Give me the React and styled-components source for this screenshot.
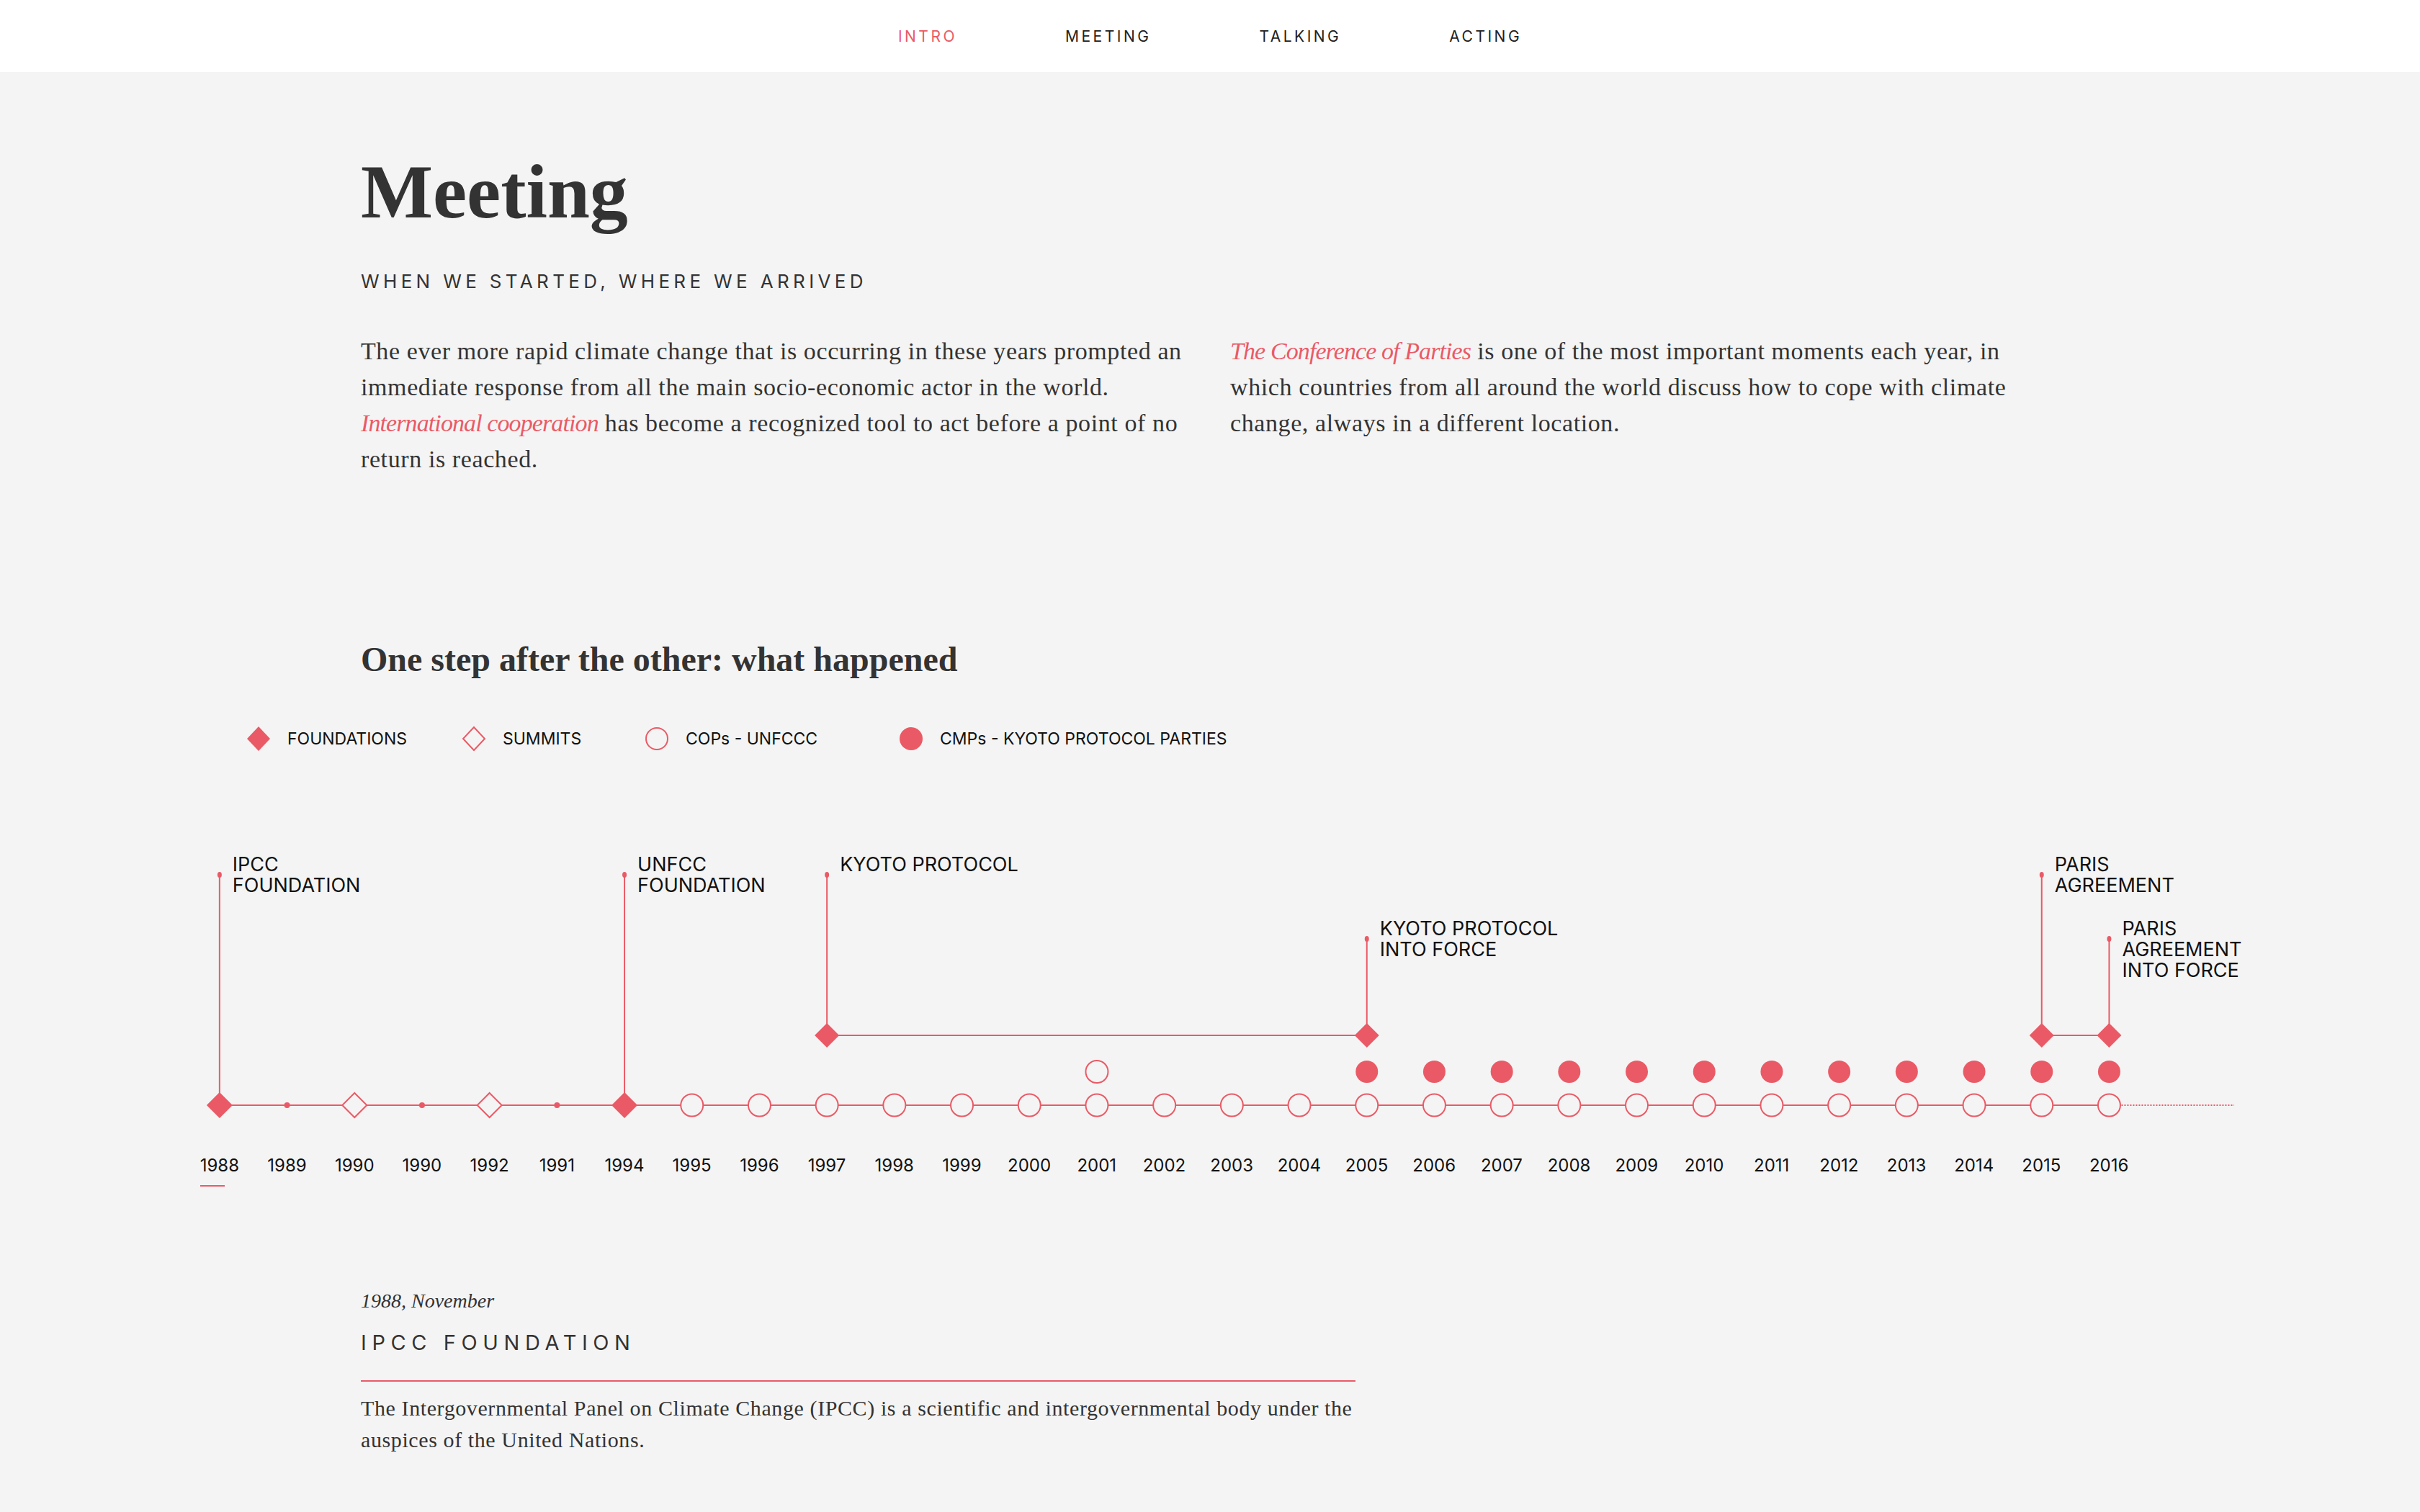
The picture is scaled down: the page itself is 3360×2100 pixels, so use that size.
import React from "react";
import styled, { createGlobalStyle } from "styled-components";

const RED = "#ea5a66";
const BG = "#f4f4f4";
const STEP = 93.7;
const cx = i => STEP / 2 + i * STEP;

const AXIS_Y = 365;
const CMP_Y = 318.5;
const BRACKET_Y = 268;
const HIGH = 45;
const LOW = 134;

const years = [
  "1988", "1989", "1990", "1990", "1992", "1991", "1994", "1995", "1996", "1997",
  "1998", "1999", "2000", "2001", "2002", "2003", "2004", "2005", "2006", "2007",
  "2008", "2009", "2010", "2011", "2012", "2013", "2014", "2015", "2016"
];

const axisType = i => {
  if (i === 0 || i === 6) return "foundation";
  if (i === 2 || i === 4) return "summit";
  if (i < 7) return "dot";
  return "cop";
};

const events = [
  { i: 0, top: HIGH, end: AXIS_Y, lines: ["IPCC", "FOUNDATION"] },
  { i: 6, top: HIGH, end: AXIS_Y, lines: ["UNFCC", "FOUNDATION"] },
  { i: 9, top: HIGH, end: BRACKET_Y, lines: ["KYOTO PROTOCOL"] },
  { i: 17, top: LOW, end: BRACKET_Y, lines: ["KYOTO PROTOCOL", "INTO FORCE"] },
  { i: 27, top: HIGH, end: BRACKET_Y, lines: ["PARIS", "AGREEMENT"] },
  { i: 28, top: LOW, end: BRACKET_Y, lines: ["PARIS", "AGREEMENT", "INTO FORCE"] }
];

const GlobalStyle = createGlobalStyle`
  html, body {
    margin: 0;
    padding: 0;
    background: ${BG};
  }
  * {
    box-sizing: border-box;
  }
`;

const Diamond = ({ x, y, r, filled }) => (
  <path
    d={`M${x} ${y - r} L${x + r} ${y} L${x} ${y + r} L${x - r} ${y} Z`}
    fill={filled ? RED : BG}
    stroke={RED}
    strokeWidth={filled ? 0 : 2}
  />
);

const Ring = ({ x, y, filled }) => (
  <circle
    cx={x}
    cy={y}
    r={15.5}
    fill={filled ? RED : BG}
    stroke={RED}
    strokeWidth={filled ? 0 : 2}
  />
);

const AxisMarker = ({ i }) => {
  const type = axisType(i);
  const x = cx(i);
  if (type === "foundation") return <Diamond x={x} y={AXIS_Y} r={18} filled />;
  if (type === "summit") return <Diamond x={x} y={AXIS_Y} r={17} />;
  if (type === "dot") return <circle cx={x} cy={AXIS_Y} r={4} fill={RED} />;
  return <Ring x={x} y={AXIS_Y} />;
};

const LegendIcon = ({ kind }) => (
  <svg width="34" height="36" viewBox="0 0 34 36">
    {kind === "foundation" && <path d="M17 1 L33 18 L17 35 L1 18 Z" fill={RED} />}
    {kind === "summit" && (
      <path d="M17 2 L32 18 L17 34 L2 18 Z" fill="none" stroke={RED} strokeWidth="2" />
    )}
    {kind === "cop" && <circle cx="17" cy="18" r="15" fill="none" stroke={RED} strokeWidth="2" />}
    {kind === "cmp" && <circle cx="17" cy="18" r="16" fill={RED} />}
  </svg>
);

const TimelineChart = () => (
  <Chart>
    <svg width="2844" height="400" viewBox="0 0 2844 400">
      <line x1={cx(0)} y1={AXIS_Y} x2={cx(28)} y2={AXIS_Y} stroke={RED} strokeWidth="2" />
      <line
        x1={cx(28) + 17}
        y1={AXIS_Y}
        x2={2844}
        y2={AXIS_Y}
        stroke={RED}
        strokeWidth="2"
        strokeDasharray="2 2"
      />
      <line x1={cx(9)} y1={BRACKET_Y} x2={cx(17)} y2={BRACKET_Y} stroke={RED} strokeWidth="2" />
      <line x1={cx(27)} y1={BRACKET_Y} x2={cx(28)} y2={BRACKET_Y} stroke={RED} strokeWidth="2" />
      {events.map(e => (
        <g key={e.i}>
          <line x1={cx(e.i)} y1={e.top} x2={cx(e.i)} y2={e.end} stroke={RED} strokeWidth="2" />
          <ellipse cx={cx(e.i)} cy={e.top} rx="3" ry="4" fill={RED} />
        </g>
      ))}
      {[9, 17, 27, 28].map(i => (
        <Diamond key={i} x={cx(i)} y={BRACKET_Y} r={17} filled />
      ))}
      <Ring x={cx(13)} y={CMP_Y} />
      {years.map((y, i) => (i >= 17 ? <Ring key={i} x={cx(i)} y={CMP_Y} filled /> : null))}
      {years.map((y, i) => (
        <AxisMarker key={i} i={i} />
      ))}
    </svg>
    {events.map(e => (
      <EventLabel key={e.i} style={{ left: cx(e.i) + 18, top: e.top - 29 }}>
        {e.lines.map(l => (
          <div key={l}>{l}</div>
        ))}
      </EventLabel>
    ))}
  </Chart>
);

const App = () => (
  <>
    <GlobalStyle />
    <Nav>
      <NavItem $active>INTRO</NavItem>
      <NavItem>MEETING</NavItem>
      <NavItem>TALKING</NavItem>
      <NavItem>ACTING</NavItem>
    </Nav>

    <Content>
      <Title>Meeting</Title>
      <Subtitle>WHEN WE STARTED, WHERE WE ARRIVED</Subtitle>
      <Columns>
        <Paragraph>
          The ever more rapid climate change that is occurring in these years prompted an
          immediate response from all the main socio-economic actor in the world.{" "}
          <Highlight>International cooperation</Highlight> has become a recognized tool to act
          before a point of no return is reached.
        </Paragraph>
        <Paragraph>
          <Highlight>The Conference of Parties</Highlight> is one of the most important moments
          each year, in which countries from all around the world discuss how to cope with
          climate change, always in a different location.
        </Paragraph>
      </Columns>
      <SectionTitle>One step after the other: what happened</SectionTitle>
    </Content>

    <Timeline>
      <Legend>
        <LegendItem>
          <LegendIcon kind="foundation" />
          FOUNDATIONS
        </LegendItem>
        <LegendItem>
          <LegendIcon kind="summit" />
          SUMMITS
        </LegendItem>
        <LegendItem>
          <LegendIcon kind="cop" />
          COPs - UNFCCC
        </LegendItem>
        <LegendItem>
          <LegendIcon kind="cmp" />
          CMPs - KYOTO PROTOCOL PARTIES
        </LegendItem>
      </Legend>
      <TimelineChart />
      <Years>
        {years.map((y, i) => (
          <YearCell key={i}>
            <Year $active={i === 0}>{y}</Year>
          </YearCell>
        ))}
      </Years>
    </Timeline>

    <Content>
      <Detail>
        <DetailDate>1988, November</DetailDate>
        <DetailTitle>IPCC FOUNDATION</DetailTitle>
        <DetailRule />
        <DetailText>
          The Intergovernmental Panel on Climate Change (IPCC) is a scientific and
          intergovernmental body under the auspices of the United Nations.
        </DetailText>
      </Detail>
    </Content>
  </>
);

export default App;

const Nav = styled.nav`
  height: 100px;
  background: #ffffff;
  display: flex;
  align-items: center;
  justify-content: center;
  gap: 150px;
`;

const NavItem = styled.a`
  font-family: Inter, "Liberation Sans", sans-serif;
  font-size: 21px;
  font-weight: 400;
  letter-spacing: 3.5px;
  color: ${props => (props.$active ? RED : "#222222")};
  cursor: pointer;
`;

const Content = styled.div`
  width: 2358px;
  margin: 0 auto;
`;

const Title = styled.h1`
  margin: 115px 0 0;
  font-family: "Liberation Serif", "DejaVu Serif", serif;
  font-weight: 700;
  font-size: 106px;
  line-height: 104px;
  color: #333333;
`;

const Subtitle = styled.h3`
  margin: 56px 0 0;
  font-family: Inter, "Liberation Sans", sans-serif;
  font-weight: 400;
  font-size: 26px;
  line-height: 1.2;
  letter-spacing: 5.35px;
  color: #333333;
`;

const Columns = styled.div`
  display: grid;
  grid-template-columns: 1150px 1150px;
  column-gap: 57px;
  align-items: start;
  margin-top: 57px;
`;

const Paragraph = styled.p`
  margin: 0;
  font-family: "Liberation Serif", "DejaVu Serif", serif;
  font-size: 34px;
  line-height: 50px;
  letter-spacing: 0.6px;
  color: #333333;
`;

const Highlight = styled.em`
  color: ${RED};
  font-style: italic;
  letter-spacing: -0.9px;
`;

const SectionTitle = styled.h2`
  margin: 224px 0 0;
  font-family: "Liberation Serif", "DejaVu Serif", serif;
  font-weight: 700;
  font-size: 48px;
  line-height: 1.2;
  color: #333333;
`;

const Timeline = styled.section`
  width: 2844px;
  margin: 63px auto 0;
`;

const Legend = styled.div`
  display: grid;
  grid-template-columns: 299px 254px 353px auto;
  padding-left: 84px;
  height: 36px;
`;

const LegendItem = styled.div`
  display: flex;
  align-items: center;
  gap: 23px;
  font-family: Inter, "Liberation Sans", sans-serif;
  font-size: 23px;
  color: #111111;
  white-space: nowrap;
`;

const Chart = styled.div`
  position: relative;
  width: 2844px;
  height: 400px;
  margin-top: 126px;

  & > svg {
    display: block;
  }
`;

const EventLabel = styled.div`
  position: absolute;
  font-family: Inter, "Liberation Sans", sans-serif;
  font-size: 27px;
  line-height: 29px;
  color: #111111;
  white-space: nowrap;
`;

const Years = styled.div`
  display: grid;
  grid-template-columns: repeat(29, ${STEP}px);
  margin-top: 35px;
`;

const YearCell = styled.div`
  display: flex;
  justify-content: center;
`;

const Year = styled.span`
  display: inline-block;
  font-family: Inter, "Liberation Sans", sans-serif;
  font-size: 24px;
  line-height: 1.2;
  color: #111111;

  &::after {
    content: "";
    display: ${props => (props.$active ? "block" : "none")};
    width: 34px;
    height: 2px;
    margin-top: 12px;
    background: ${RED};
  }
`;

const Detail = styled.div`
  width: 1385px;
  margin-top: 142px;
  padding-bottom: 60px;
`;

const DetailDate = styled.div`
  font-family: "Liberation Serif", "DejaVu Serif", serif;
  font-style: italic;
  font-size: 28px;
  line-height: 1.2;
  color: #333333;
`;

const DetailTitle = styled.h4`
  margin: 25px 0 0;
  font-family: Inter, "Liberation Sans", sans-serif;
  font-weight: 400;
  font-size: 29px;
  line-height: 1.2;
  letter-spacing: 7.6px;
  color: #333333;
`;

const DetailRule = styled.hr`
  margin: 34px 0 0;
  border: none;
  height: 2px;
  width: 1381px;
  background: ${RED};
`;

const DetailText = styled.p`
  margin: 15px 0 0;
  font-family: "Liberation Serif", "DejaVu Serif", serif;
  font-size: 30px;
  line-height: 44px;
  letter-spacing: 0.6px;
  color: #333333;
`;
